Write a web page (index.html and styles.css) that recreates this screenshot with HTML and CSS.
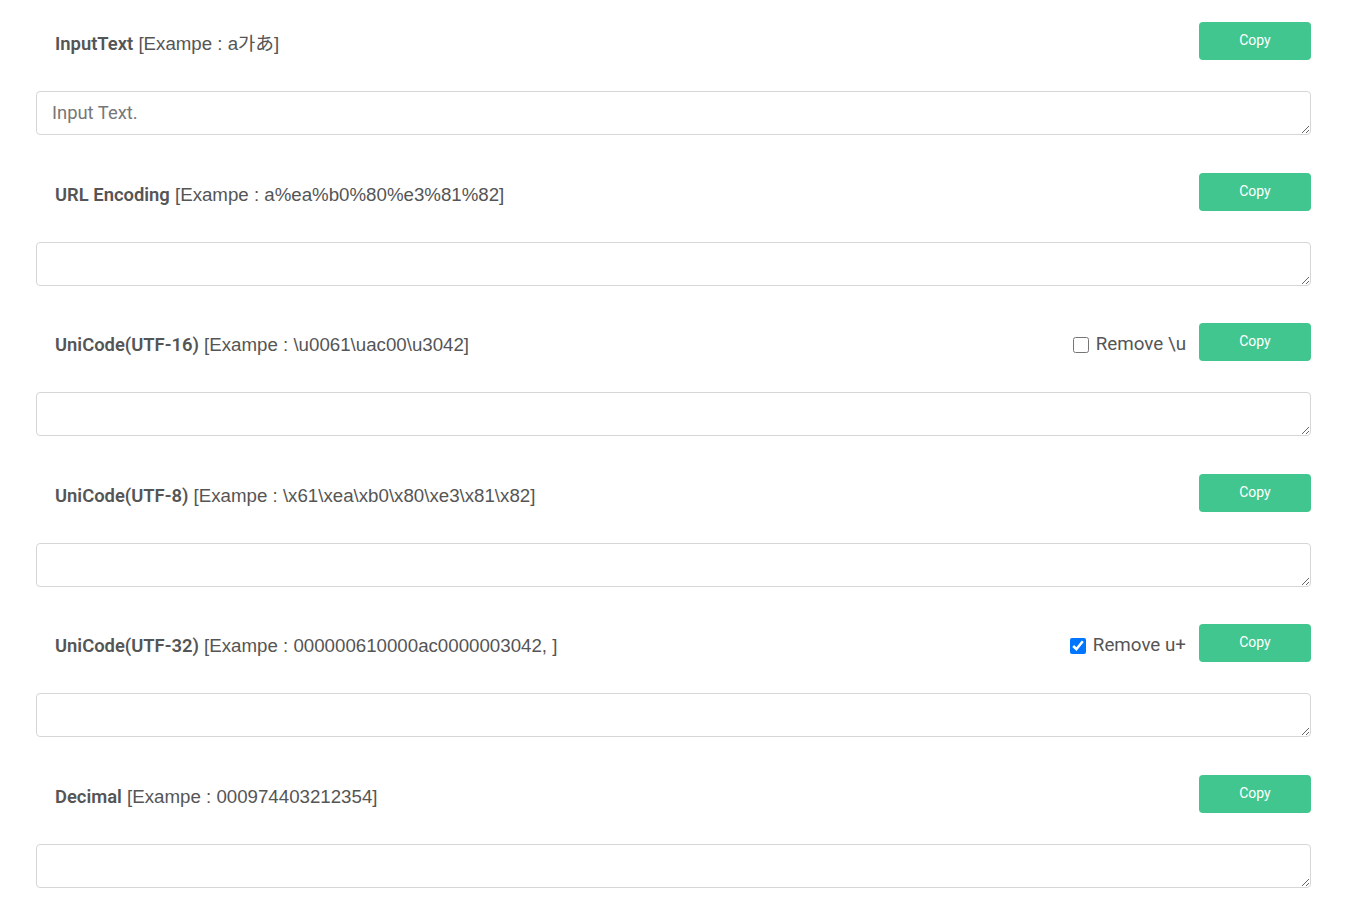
FILE: index.html
```html
<!DOCTYPE html>
<html lang="en">
<head>
<meta charset="utf-8">
<title>Text Encoder</title>
<link rel="stylesheet" href="styles.css">
</head>
<body>
<div class="page">
  <section class="block">
    <div class="head">
      <div class="label"><b>InputText</b> [Exampe : a가あ]</div>
      <button class="copy">Copy</button>
    </div>
    <textarea class="field" placeholder="Input Text."></textarea>
  </section>
  <section class="block">
    <div class="head">
      <div class="label"><b>URL Encoding</b> [Exampe : a%ea%b0%80%e3%81%82]</div>
      <button class="copy">Copy</button>
    </div>
    <textarea class="field"></textarea>
  </section>
  <section class="block">
    <div class="head">
      <div class="label"><b>UniCode(UTF-16)</b> [Exampe : \u0061\uac00\u3042]</div>
      <label class="opt"><input type="checkbox" class="chk"> Remove \u</label>
      <button class="copy">Copy</button>
    </div>
    <textarea class="field"></textarea>
  </section>
  <section class="block">
    <div class="head">
      <div class="label"><b>UniCode(UTF-8)</b> [Exampe : \x61\xea\xb0\x80\xe3\x81\x82]</div>
      <button class="copy">Copy</button>
    </div>
    <textarea class="field"></textarea>
  </section>
  <section class="block">
    <div class="head">
      <div class="label"><b>UniCode(UTF-32)</b> [Exampe : 000000610000ac0000003042, ]</div>
      <label class="opt"><input type="checkbox" class="chk" checked> Remove u+</label>
      <button class="copy">Copy</button>
    </div>
    <textarea class="field"></textarea>
  </section>
  <section class="block">
    <div class="head">
      <div class="label"><b>Decimal</b> [Exampe : 000974403212354]</div>
      <button class="copy">Copy</button>
    </div>
    <textarea class="field"></textarea>
  </section>
</div>
</body>
</html>
```
FILE: styles.css
```css
html, body {
  margin: 0;
  padding: 0;
  background: #fff;
}
body {
  font-family: Roboto, "Liberation Sans", "Noto Sans CJK KR", "Noto Sans CJK JP", sans-serif;
  color: #555;
}
.page {
  padding: 22px 45px 0 36px;
}
.block {
  display: flex;
  flex-direction: column;
  margin-bottom: 37.5px;
}
.head {
  display: flex;
  align-items: center;
  height: 38px;
  margin-bottom: 31px;
}
.label {
  flex: 1;
  font-family: "Liberation Sans", Arial, "Noto Sans CJK KR", "Noto Sans CJK JP", sans-serif;
  font-size: 18.7px;
  line-height: 21px;
  padding-left: 19px;
  padding-top: 5px;
  color: #555;
  white-space: nowrap;
}
.label b {
  font-family: Roboto, "Liberation Sans", sans-serif;
  font-size: 18.4px;
  font-weight: 600;
}
.opt {
  display: flex;
  align-items: center;
  font-size: 18.8px;
  line-height: 21px;
  padding-top: 5px;
  margin-right: 13px;
  color: #555;
  white-space: nowrap;
}
.chk {
  width: 16px;
  height: 16px;
  margin: 0 7px 0 0;
}
.copy {
  width: 112px;
  height: 38px;
  border: none;
  border-radius: 4px;
  background: #42c68f;
  color: #fff;
  font-family: Roboto, "Liberation Sans", sans-serif;
  font-size: 14px;
  padding: 0 0 2px;
  cursor: pointer;
}
.field {
  display: block;
  box-sizing: border-box;
  width: 100%;
  height: 44px;
  margin: 0;
  padding: 10px 15px;
  border: 1px solid #d6d6d6;
  border-radius: 4px;
  font-family: Roboto, "Liberation Sans", "Noto Sans CJK KR", sans-serif;
  font-size: 18.4px;
  line-height: 21.6px;
  color: #555;
  resize: vertical;
}
.field::placeholder {
  color: #777;
}
```
